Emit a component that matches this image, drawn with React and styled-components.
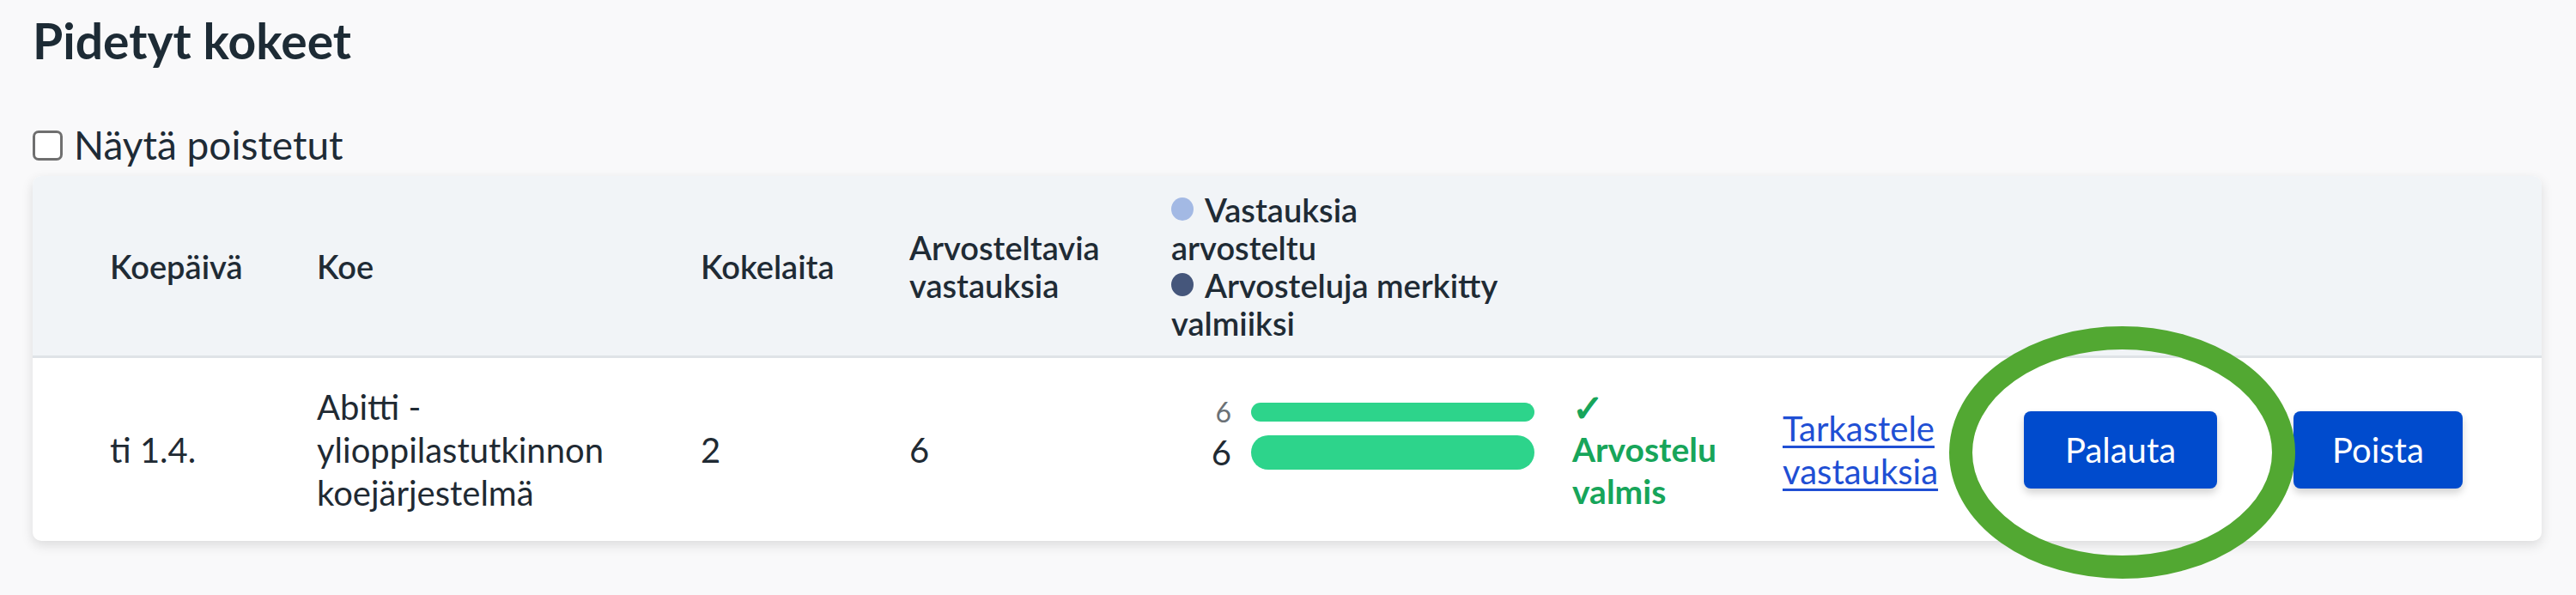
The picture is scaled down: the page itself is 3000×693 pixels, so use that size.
import styled, { createGlobalStyle } from "styled-components"

const GlobalStyle = createGlobalStyle`
    html, body {
        margin: 0;
        padding: 0;
        background: #f9f9fa;
    }
    body {
        font-family: Lato, "Noto Sans", sans-serif;
        color: #1e2a34;
    }
`

const COLUMNS = "241px 447px 243px 305px 467px 245px 281px 314px 1fr"

const Page = styled.div`
    width: 3000px;
    min-height: 693px;
    box-sizing: border-box;
    padding: 0 40px 0 38px;
    overflow: visible;
`
const Title = styled.h2`
    margin: 17px 0 0 0;
    font-size: 57px;
    line-height: 60px;
    font-weight: 700;
    color: #1d2b35;
`
const FilterRow = styled.label`
    display: flex;
    align-items: center;
    gap: 13px;
    margin-top: 68px;
    height: 48px;
    font-size: 46px;
    line-height: 48px;
    color: #1e2b36;

    & input {
        appearance: none;
        margin: 0;
        width: 35px;
        height: 35px;
        box-sizing: border-box;
        border: 3px solid #6f6f6f;
        border-radius: 7px;
        background: #fff;
    }
`
const Card = styled.div`
    position: relative;
    margin-top: 12px;
    width: 2922px;
    background: #fff;
    border-radius: 10px;
    box-shadow: 0 5px 14px rgba(0, 0, 0, 0.12);
    overflow: visible;
`
const HeaderRow = styled.div`
    display: grid;
    grid-template-columns: ${COLUMNS};
    align-items: center;
    height: 212px;
    box-sizing: border-box;
    padding-left: 90px;
    background: #f1f4f7;
    border-bottom: 3px solid #dfe3e7;
    border-radius: 10px 10px 0 0;
`
const HeadCell = styled.div`
    font-size: 38px;
    line-height: 44px;
    font-weight: 600;
    color: #1f2b35;
    padding-right: 20px;
`
const Legend = styled.div`
    display: flex;
    flex-direction: column;
`
const LegendItem = styled.div`
    display: flex;
    gap: 13px;
`
const Dot = styled.span`
    flex: none;
    width: 26px;
    height: 27px;
    margin-top: 8px;
    border-radius: 50%;
    background: ${p => p.$color};
`
const BodyRow = styled.div`
    display: grid;
    grid-template-columns: ${COLUMNS};
    align-items: center;
    height: 213px;
    box-sizing: border-box;
    padding-left: 90px;
`
const Cell = styled.div`
    font-size: 40px;
    line-height: 50px;
    color: #1f2a33;
    padding-right: 24px;
`
const Bars = styled.div`
    align-self: start;
    margin-top: 52px;
    margin-left: 40px;
    display: grid;
    grid-template-columns: 30px 330px;
    column-gap: 23px;
    row-gap: 16px;
    align-items: center;
`
const BarNumber = styled.span`
    text-align: right;
    font-size: ${p => (p.$big ? "40px" : "32px")};
    line-height: ${p => (p.$big ? "40px" : "22px")};
    color: ${p => (p.$big ? "#1f2a33" : "#6b7176")};
`
const Bar = styled.div`
    height: ${p => (p.$big ? "40px" : "22px")};
    border-radius: 20px;
    background: #2dd48b;
`
const Status = styled.div`
    font-size: 39px;
    line-height: 49px;
    font-weight: 700;
    color: #17a55a;
`
const Check = styled.div`
    font-size: 44px;
    line-height: 49px;
    font-weight: 700;
`
const Link = styled.a`
    font-size: 40px;
    line-height: 50px;
    color: #1f4fd4;
    text-decoration: underline;
    text-decoration-thickness: 3px;
    text-underline-offset: 5px;
    cursor: pointer;
`
const Button = styled.button`
    justify-self: start;
    height: 90px;
    padding: 0 ${p => p.$pad}px;
    border: none;
    border-radius: 8px;
    background: #004bcd;
    color: #fff;
    font-family: Lato, "Noto Sans", sans-serif;
    font-size: 40px;
    box-shadow: 0 5px 10px rgba(0, 0, 0, 0.18);
    cursor: pointer;
`
const Highlight = styled.svg`
    position: absolute;
    left: 2232px;
    top: 175px;
    overflow: visible;
    pointer-events: none;
    z-index: 2;
`

const App = () => {
    return (
        <Page>
            <GlobalStyle />
            <Title>Pidetyt kokeet</Title>
            <FilterRow>
                <input type="checkbox" />
                Näytä poistetut
            </FilterRow>
            <Card>
                <HeaderRow>
                    <HeadCell>Koepäivä</HeadCell>
                    <HeadCell>Koe</HeadCell>
                    <HeadCell>Kokelaita</HeadCell>
                    <HeadCell>Arvosteltavia<br />vastauksia</HeadCell>
                    <HeadCell>
                        <Legend>
                            <LegendItem>
                                <Dot $color="#a3b9e4" />
                                <span>Vastauksia</span>
                            </LegendItem>
                            <div>arvosteltu</div>
                            <LegendItem>
                                <Dot $color="#45567b" />
                                <span>Arvosteluja merkitty</span>
                            </LegendItem>
                            <div>valmiiksi</div>
                        </Legend>
                    </HeadCell>
                    <div />
                    <div />
                    <div />
                    <div />
                </HeaderRow>
                <BodyRow>
                    <Cell>ti 1.4.</Cell>
                    <Cell>Abitti -<br />ylioppilastutkinnon<br />koejärjestelmä</Cell>
                    <Cell>2</Cell>
                    <Cell>6</Cell>
                    <Bars>
                        <BarNumber>6</BarNumber>
                        <Bar />
                        <BarNumber $big>6</BarNumber>
                        <Bar $big />
                    </Bars>
                    <Status>
                        <Check>✓</Check>
                        Arvostelu<br />valmis
                    </Status>
                    <Cell>
                        <Link>Tarkastele<br />vastauksia</Link>
                    </Cell>
                    <Button $pad={48}>Palauta</Button>
                    <Button $pad={45}>Poista</Button>
                </BodyRow>
                <Highlight width="403" height="294" viewBox="0 0 403 294">
                    <ellipse cx="201.5" cy="147" rx="188" ry="133.5" fill="none" stroke="#52a832" strokeWidth="27" />
                </Highlight>
            </Card>
        </Page>
    )
}

export default App
